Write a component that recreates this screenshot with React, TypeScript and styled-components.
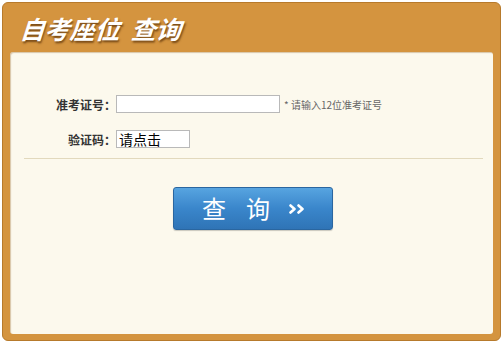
import styled, { createGlobalStyle } from "styled-components";

const GlobalStyle = createGlobalStyle`
  body {
    margin: 0;
    background: #ffffff;
    font-family: "Noto Sans CJK SC", "Liberation Sans", sans-serif;
  }
`;

const Frame = styled.div`
  box-sizing: border-box;
  margin: 2px 0 0 2px;
  width: 499px;
  height: 339px;
  background: #d4943f;
  border: 1px solid #b77a2c;
  border-radius: 6px;
  display: flex;
  flex-direction: column;
`;

const Header = styled.div`
  height: 49px;
  display: flex;
  align-items: center;
  padding-left: 17px;
`;

const Title = styled.h1`
  margin: 0;
  color: #ffffff;
  font-size: 25px;
  font-weight: 700;
  font-style: italic;
  text-shadow: 1px 2px 2px rgba(90, 50, 10, 0.75);
  transform: skewX(-4deg);
`;

const Panel = styled.div`
  flex: 1;
  margin: 0 7px 6px 7px;
  background: #fcf9ed;
  border-radius: 3px;
  box-shadow: inset 1px 1px 1px rgba(150, 100, 40, 0.35);
  padding-top: 43px;
  display: flex;
  flex-direction: column;
`;

const Row = styled.div<{ $gap: number }>`
  display: flex;
  align-items: center;
  height: 18px;
  margin-bottom: ${(p) => p.$gap}px;
`;

const Label = styled.label`
  width: 106px;
  text-align: right;
  font-size: 12px;
  font-weight: 700;
  color: #333333;
`;

const Input = styled.div<{ $w: number }>`
  box-sizing: border-box;
  width: ${(p) => p.$w}px;
  height: 18px;
  background: #ffffff;
  border: 1px solid #b9b9b9;
  font-size: 14px;
  line-height: 16px;
  color: #000;
  padding-left: 2px;
`;

const Hint = styled.span`
  margin-left: 4px;
  font-size: 10px;
  color: #666666;
`;

const Divider = styled.div`
  margin: 0 10px 0 14px;
  height: 1px;
  background: #e2d9bd;
`;

const ButtonWrap = styled.div`
  display: flex;
  justify-content: center;
  padding-top: 28px;
  padding-left: 2px;
`;

const QueryButton = styled.button`
  box-sizing: border-box;
  width: 160px;
  height: 43px;
  border: 1px solid #2a66a0;
  border-radius: 3px;
  background: linear-gradient(#57a4e0, #3a86cb 50%, #2f74b6);
  color: #ffffff;
  font-family: "Noto Sans CJK SC", sans-serif;
  font-size: 24px;
  font-weight: 400;
  display: flex;
  align-items: center;
  justify-content: center;
  padding: 0 0 2px 0;
  box-shadow: 0 1px 1px rgba(0, 0, 0, 0.2);
`;

const Char = styled.span<{ $ml: number }>`
  margin-left: ${(p) => p.$ml}px;
`;

const Arrows = styled.svg`
  margin-left: 19px;
  margin-top: 2px;
`;

export default function App() {
  return (
    <>
      <GlobalStyle />
      <Frame>
        <Header>
          <Title>自考座位&nbsp;&nbsp;查询</Title>
        </Header>
        <Panel>
          <Row $gap={17}>
            <Label>准考证号：</Label>
            <Input $w={164} />
            <Hint>* 请输入12位准考证号</Hint>
          </Row>
          <Row $gap={10}>
            <Label>验证码：</Label>
            <Input $w={74}>请点击</Input>
          </Row>
          <Divider />
          <ButtonWrap>
            <QueryButton>
              <Char $ml={2}>查</Char>
              <Char $ml={20}>询</Char>
              <Arrows width="16" height="10" viewBox="0 0 16 10">
                <path
                  d="M1.5 1.5 L5.5 5 L1.5 8.5 M9.5 1.5 L13.5 5 L9.5 8.5"
                  fill="none"
                  stroke="#ffffff"
                  strokeWidth="2.6"
                  strokeLinecap="round"
                  strokeLinejoin="round"
                />
              </Arrows>
            </QueryButton>
          </ButtonWrap>
        </Panel>
      </Frame>
    </>
  );
}
